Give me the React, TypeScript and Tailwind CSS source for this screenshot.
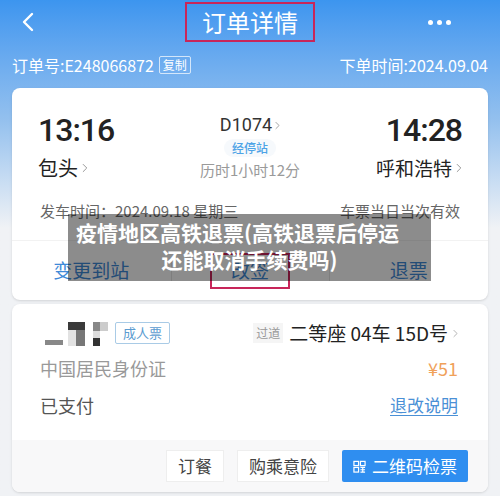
import React from 'react';

const cjk = { fontFamily: '"Noto Sans CJK SC", "Noto Sans", sans-serif' };
const num = { fontFamily: 'Roboto, "Noto Sans", sans-serif' };

function Chevron({ className = '' }: { className?: string }) {
  return (
    <svg viewBox="0 0 8 14" className={className} fill="none" stroke="currentColor" strokeWidth="1.4">
      <path d="M1.5 2l5 5-5 5" strokeLinecap="round" strokeLinejoin="round" />
    </svg>
  );
}

function QrIcon() {
  return (
    <svg viewBox="0 0 14 14" className="w-[13px] h-[13px]" fill="none" stroke="white" strokeWidth="1.3">
      <rect x="1" y="1.5" width="5" height="4.5" />
      <rect x="8" y="1.5" width="5" height="4.5" />
      <rect x="1" y="8" width="5" height="5" />
      <path d="M8 8h5M8 10.5h5M8 13h5M10.5 8v5" />
    </svg>
  );
}

export default function App() {
  return (
    <div
      className="w-[500px] h-[496px] overflow-hidden relative bg-gradient-to-b from-[#3c95ef] via-[#93c0ee] via-[24%] to-[#f0f2f5] to-[46%] text-[#222]"
      style={cjk}
    >
      {/* nav bar */}
      <div className="h-[44px] grid grid-cols-[1fr_auto_1fr] items-center text-white">
        <div className="pl-[22px]">
          <svg viewBox="0 0 12 20" className="w-[12px] h-[20px]" fill="none" stroke="white" strokeWidth="2.4">
            <path d="M10 2L2 10l8 8" strokeLinecap="round" strokeLinejoin="round" />
          </svg>
        </div>
        <div className="border-2 border-[#c8265a] w-[130px] h-[40px] flex items-center justify-center text-[24px]">
          订单详情
        </div>
        <div className="flex justify-end gap-[4px] pr-[49px]">
          <span className="w-[5px] h-[5px] rounded-full bg-white" />
          <span className="w-[5px] h-[5px] rounded-full bg-white" />
          <span className="w-[5px] h-[5px] rounded-full bg-white" />
        </div>
      </div>

      {/* order line */}
      <div className="flex items-center justify-between px-[12px] mt-[9px] text-white text-[16px] h-[24px]">
        <div className="flex items-center">
          <span>订单号:E248066872</span>
          <span className="ml-[5px] border border-white/70 rounded-[2px] text-[12px] px-[3px] leading-[16px]">复制</span>
        </div>
        <span>下单时间:2024.09.04</span>
      </div>

      {/* trip card */}
      <div className="mx-[12px] mt-[11px] bg-white rounded-[8px] shadow-sm">
        <div className="px-[26px] pt-[23px] grid grid-cols-[1fr_auto_1fr]">
          <div>
            <div className="text-[32px] leading-[38px] font-medium tracking-[-1px]" style={num}>13:16</div>
            <div className="flex items-center text-[20px] leading-[26px] mt-[6px]">
              包头<Chevron className="w-[6px] h-[10px] ml-[4px] text-[#999]" />
            </div>
          </div>
          <div className="flex flex-col items-center pt-[2px]">
            <div className="flex items-center text-[18px] text-[#333] leading-[24px]" style={num}>
              D1074<Chevron className="w-[5px] h-[9px] ml-[3px] text-[#999]" />
            </div>
            <div className="text-[12px] text-[#4da3e6] px-[8px] leading-[18px] mt-[2px] bg-[#f6f9fc] rounded-full font-medium">经停站</div>
            <div className="text-[15px] leading-[22px] text-[#9a9a9a] mt-[2px]">历时1小时12分</div>
          </div>
          <div className="flex flex-col items-end">
            <div className="text-[32px] leading-[38px] font-medium tracking-[-1px]" style={num}>14:28</div>
            <div className="flex items-center text-[19px] leading-[26px] mt-[6px]">
              呼和浩特<Chevron className="w-[6px] h-[10px] ml-[4px] text-[#999]" />
            </div>
          </div>
        </div>
        <div className="px-[28px] mt-[19px] flex justify-between text-[15px] leading-[22px] text-[#666]">
          <span>发车时间：2024.09.18 星期三</span>
          <span>车票当日当次有效</span>
        </div>
        <div className="mt-[18px] border-t border-[#f2f2f2] h-[60px] grid grid-cols-3 items-center text-[19px] text-[#3f8ad8]">
          <div className="flex justify-center">变更到站</div>
          <div className="relative h-full flex items-center justify-center">
            <div className="absolute left-0 top-[20px] h-[20px] border-l border-[#e6e6e6]" />
            <div className="absolute left-[39px] top-[12px] w-[80px] h-[36px] border-2 border-[#c8265a]" />
            <span>改签</span>
          </div>
          <div className="relative h-full flex items-center justify-center">
            <div className="absolute left-0 top-[20px] h-[20px] border-l border-[#e6e6e6]" />
            <span>退票</span>
          </div>
        </div>
      </div>

      {/* passenger card */}
      <div className="mx-[12px] mt-[4px] bg-white rounded-[8px] shadow-sm overflow-hidden">
        <div className="pl-[28px] pr-[30px] pt-[16px]">
          <div className="flex items-center justify-between h-[26px]">
            <div className="flex items-center">
              <div className="flex items-end h-[26px] ml-[5px]">
                <div className="w-[18px] h-[5px] bg-[#888] mb-[1px]" />
                <div className="flex flex-col ml-[5px]">
                  <div className="w-[17px] h-[8px] bg-[#3a3a3a]" />
                  <div className="w-[17px] h-[16px] flex"><div className="w-[8px] bg-[#e2e2e2]" /><div className="w-[9px] bg-[#777]" /></div>
                </div>
                <div className="flex flex-col ml-[8px]">
                  <div className="flex"><div className="w-[7px] h-[9px] bg-[#888]" /><div className="w-[8px] h-[9px] bg-[#ccc]" /></div>
                  <div className="w-[7px] h-[7px] bg-[#ddd]" />
                  <div className="w-[7px] h-[8px] bg-[#333]" />
                </div>
              </div>
              <span className="ml-[7px] border border-[#a9cbe6] text-[#5b9bd0] text-[13px] px-[7px] leading-[20px] rounded-[2px]">成人票</span>
            </div>
            <div className="flex items-center">
              <span className="bg-[#f5f5f5] text-[#999] text-[12px] px-[3px] leading-[20px] mr-[6px]">过道</span>
              <span className="text-[19px] text-[#222]">二等座 04车 15D号</span>
              <Chevron className="w-[5px] h-[9px] ml-[5px] text-[#aaa]" />
            </div>
          </div>
          <div className="flex justify-between items-center mt-[9px] text-[18px] leading-[26px]">
            <span className="text-[#999]">中国居民身份证</span>
            <span className="text-[#f0a15a]">¥51</span>
          </div>
          <div className="flex justify-between items-center mt-[11px] text-[18px] leading-[26px]">
            <span className="text-[#555]">已支付</span>
            <span className="text-[#4a90d6] underline underline-offset-[3px] text-[17px]">退改说明</span>
          </div>
        </div>
        <div className="mt-[22px] bg-[#f8f8f9] h-[52px] flex items-center justify-end gap-[13px] pr-[20px]">
          <button className="h-[32px] px-[11px] bg-white border border-[#eee] text-[17px] text-[#444]">订餐</button>
          <button className="h-[32px] px-[11px] bg-white border border-[#eee] text-[17px] text-[#444]">购乘意险</button>
          <button className="h-[32px] px-[11px] bg-[#2f8ef0] text-[17px] text-white flex items-center gap-[6px] rounded-[2px]">
            <QrIcon />二维码检票
          </button>
        </div>
      </div>

      {/* overlay caption */}
      <div className="absolute left-[68px] top-[214px] w-[363px] h-[67px] bg-black/45 flex flex-col items-center pt-[5px] text-white text-[21px] font-bold leading-[27px]">
        <span className="pl-[8px] self-start">疫情地区高铁退票(高铁退票后停运</span>
        <span>还能取消手续费吗)</span>
      </div>
    </div>
  );
}
